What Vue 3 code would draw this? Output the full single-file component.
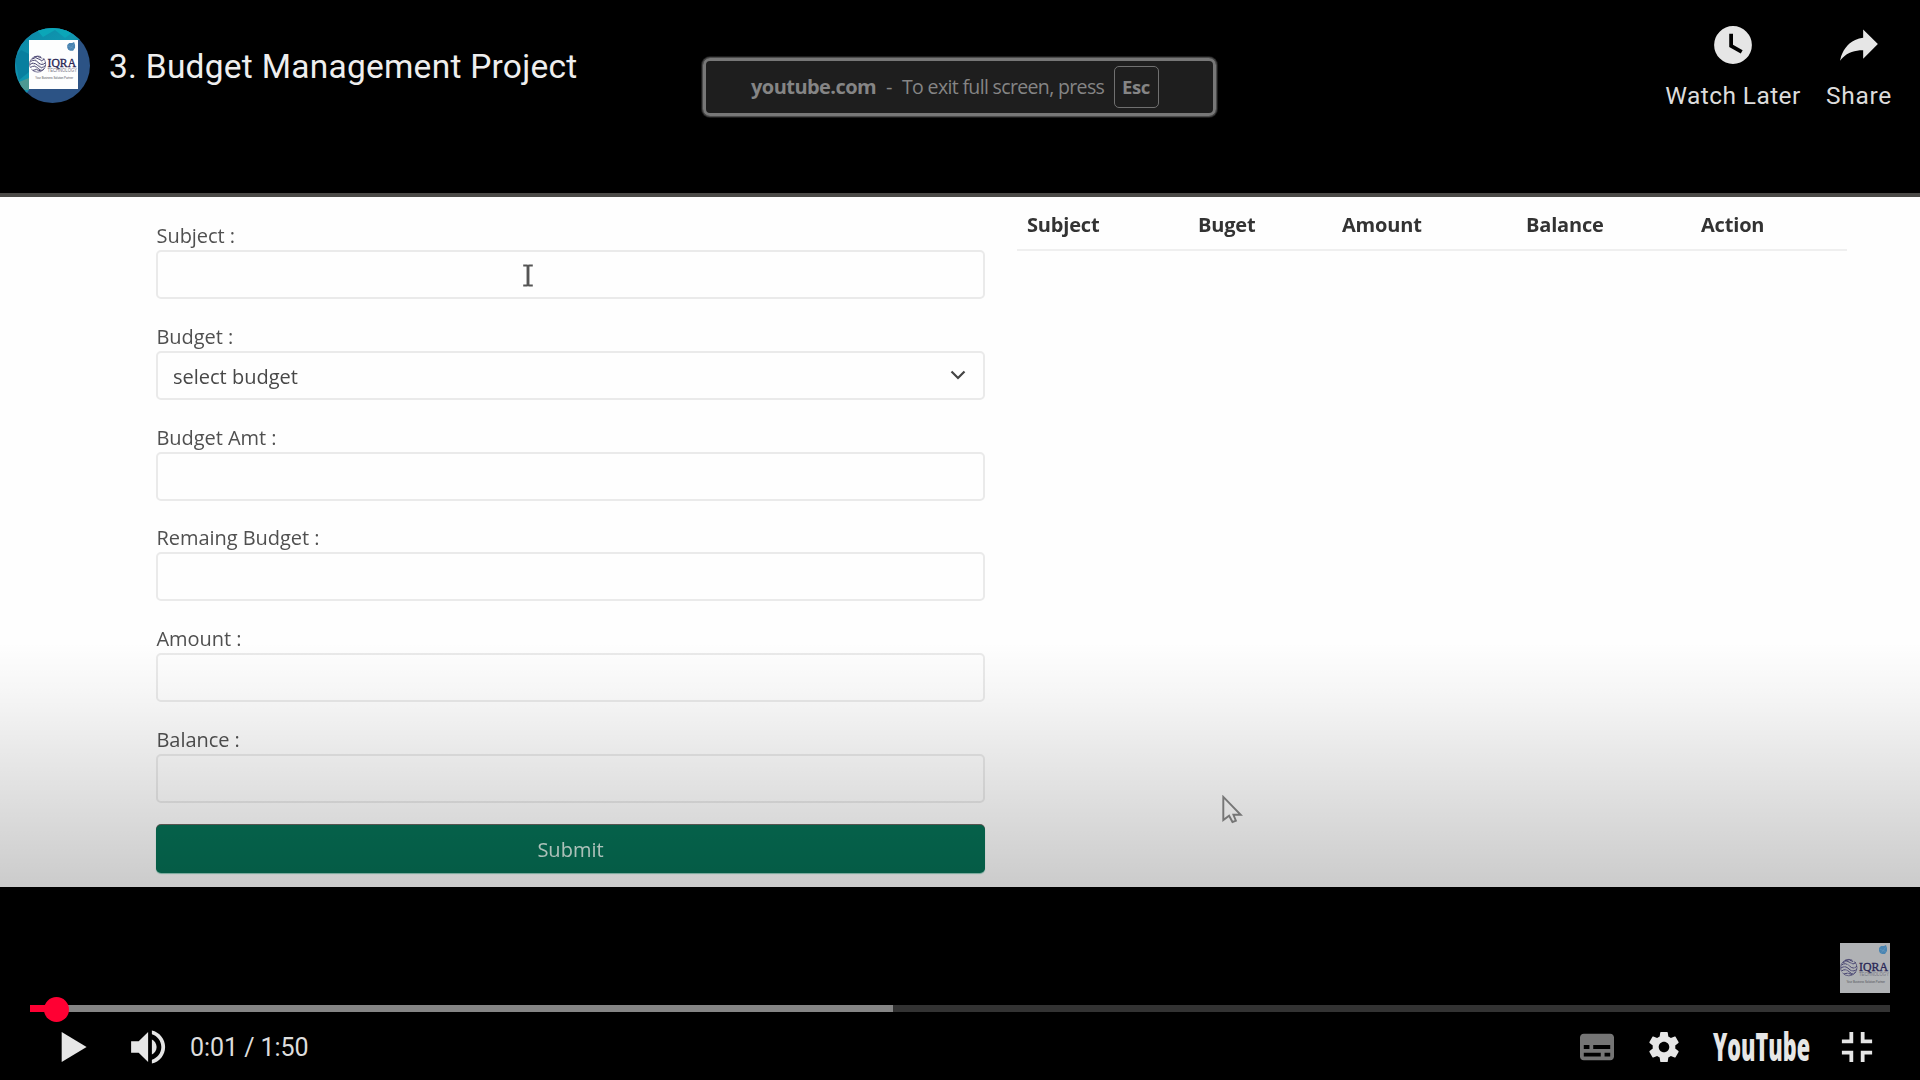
<script setup>
const fields = [
  { id: 'subject', label: 'Subject :' },
  { id: 'budget', label: 'Budget :', value: 'select budget', select: true },
  { id: 'budgetAmt', label: 'Budget Amt :' },
  { id: 'remaining', label: 'Remaing Budget :' },
  { id: 'amount', label: 'Amount :' },
  { id: 'balance', label: 'Balance :' },
]
const columns = ['Subject', 'Buget', 'Amount', 'Balance', 'Action']
</script>

<template>
  <div class="player">
    <svg class="defs" width="0" height="0">
      <defs>
        <linearGradient id="teal" x1="0" y1="0" x2="1" y2="1">
          <stop offset="0" stop-color="#0b86a5" />
          <stop offset=".5" stop-color="#1097b0" />
          <stop offset="1" stop-color="#2b5283" />
        </linearGradient>
        <clipPath id="round"><circle cx="37.5" cy="37.5" r="37.5" /></clipPath>
        <symbol id="iqra" viewBox="0 0 50 50">
          <g fill="none" stroke="#45416f" stroke-width="1">
            <circle cx="8.8" cy="24.6" r="8.2" stroke-width=".7" stroke-dasharray="20 2" />
            <path d="M3 19.500q4-3 7 0t6 0M1.500 22q4-3 8 1t7.500 0M1 25q4-3 8 1t8 0M1.500 28q4-3 8 1t6 0M4 31q3-2 8 .5M5 17.500q4-2 8 1" />
            <path d="M5 18q5 6 9 13M9 17q5 6 7 10M3 22q4 5 6 10" stroke="#a3a2b4" stroke-width=".6" />
          </g>
          <path d="M39 5l2-2 3 0 2-1 1 3 0 3-2 3-3 0-2-1-1-2Z" fill="#4a85b2" />
          <path d="M39.500 6l6 2.500M41.500 9.500l4-5" stroke="#78a5c6" stroke-width=".4" />
          <text x="19" y="27.600" font-family="Liberation Serif, serif" font-size="13" textLength="29" lengthAdjust="spacingAndGlyphs" fill="#2a2756" stroke="#2a2756" stroke-width=".35">IQRA</text>
          <text x="19" y="33" font-family="Liberation Sans, sans-serif" font-size="5" textLength="30" lengthAdjust="spacingAndGlyphs" fill="#777784">TECHNOLOGY</text>
          <text x="6.5" y="39.500" font-family="Liberation Sans, sans-serif" font-size="3.400" textLength="38.500" lengthAdjust="spacingAndGlyphs" fill="#4f5058">Your Business Solution Partner</text>
        </symbol>
      </defs>
    </svg>

    <header class="top">
      <svg class="avatar" viewBox="0 0 75 75">
        <g clip-path="url(#round)">
          <rect width="75" height="75" fill="#2c5385" />
          <path d="M0 0H66V12H14V62L8 70H0Z" fill="url(#teal)" />
          <path d="M0 30L6 22 14 26V44L4 52Z" fill="#087f9f" />
          <path d="M20 0l8 9 12-7 10 8 8-6V0Z" fill="#0ba6b8" />
          <path d="M4 54l10-4v12H6Z" fill="#4d9992" />
          <rect x="14" y="12" width="49" height="49" fill="#fdfefe" />
          <use href="#iqra" x="14" y="12" width="49" height="49" />
        </g>
      </svg>
      <h1 class="title"><span>3. Budget Management Project</span></h1>

      <div class="toast">
        <b class="host">youtube.com</b>
        <span class="dash">-</span>
        <span class="hint">To exit full screen, press</span>
        <kbd>Esc</kbd>
      </div>

      <nav class="actions">
        <button class="action later">
          <svg viewBox="0 0 36 36"><path fill-rule="evenodd" d="M18 8a10 10 0 1 0 0 20a10 10 0 0 0 0-20ZM16 19.02V12h2v5.86l5.1 2.95-1 1.73Z" /></svg>
          <span>Watch Later</span>
        </button>
        <button class="action share">
          <svg viewBox="0 0 36 36"><path d="m20.2 14.19 0-4.45 7.79 7.79-7.79 7.79 0-4.56C16.27 20.69 12.1 21.81 9.34 24.76 8.8 25.13 7.6 27.29 8.12 25.65 9.08 21.32 11.8 17.18 15.98 15.38c1.32-.6 2.76-.98 4.21-1.18z" /></svg>
          <span>Share</span>
        </button>
      </nav>
    </header>

    <main class="video">
      <form class="form" @submit.prevent>
        <div v-for="f in fields" :key="f.id" class="field">
          <label>{{ f.label }}</label>
          <div class="input">
            <span v-if="f.value">{{ f.value }}</span>
            <svg v-if="f.select" class="chevron" viewBox="0 0 16 10"><path d="M1.5 1.5 8 8l6.5-6.5" /></svg>
          </div>
        </div>
        <button class="submit">Submit</button>
      </form>
      <section class="table">
        <div class="row">
          <b v-for="c in columns" :key="c">{{ c }}</b>
        </div>
      </section>
      <svg class="ibeam" viewBox="0 0 12 24"><path d="M1 1.5h4l1 1 1-1h4M1 22.5h4l1-1 1 1h4" /><path d="M6 2v20" stroke-width="3" /></svg>
      <svg class="pointer" viewBox="0 0 22 30"><path d="M2 2V26L8 21.5 11.5 28 15 26.5 12.5 20.5H20Z" /></svg>
      <div class="shade"></div>
    </main>

    <footer class="bottom">
      <svg class="watermark" viewBox="0 0 50 50"><rect width="50" height="50" fill="#b0b2b5" /><use href="#iqra" width="50" height="50" /></svg>
      <div class="progress">
        <div class="loaded"></div>
        <div class="played"></div>
        <div class="knob"></div>
      </div>
      <div class="controls">
        <svg class="btn play" viewBox="0 0 36 36"><path d="M12 10 25.2 18 12 26Z" /></svg>
        <svg class="btn volume" viewBox="0 0 36 36"><path d="M8 21h4l5 5V10l-5 5H8ZM19 14v8c1.48-.68 2.5-2.23 2.5-4 0-1.74-1.02-3.26-2.5-4ZM19 11.29C21.89 12.15 24 14.83 24 18s-2.11 5.85-5 6.71v2.06c4.01-.91 7-4.49 7-8.77s-2.99-7.86-7-8.77Z" /></svg>
        <span class="time">0:01 / 1:50</span>
        <span class="spacer"></span>
        <svg class="btn cc" viewBox="0 0 36 36"><path fill-rule="evenodd" d="M11 11C9.89 11 9 11.9 9 13V23C9 24.1 9.89 25 11 25H25C26.1 25 27 24.1 27 23V13C27 11.9 26.1 11 25 11ZM11 17h3v2h-3ZM20 23h-9v-2h9ZM25 23h-3v-2h3ZM25 19h-9v-2h9Z" /></svg>
        <svg class="btn" viewBox="0 0 36 36"><path fill-rule="evenodd" d="m 23.94,18.78 c .03,-0.25 .05,-0.51 .05,-0.78 0,-0.27 -0.02,-0.52 -0.05,-0.78 l 1.68,-1.32 c .15,-0.12 .19,-0.33 .09,-0.51 l -1.6,-2.76 c -0.09,-0.17 -0.31,-0.24 -0.48,-0.17 l -1.99,.8 c -0.41,-0.32 -0.86,-0.58 -1.35,-0.78 l -0.30,-2.12 c -0.02,-0.19 -0.19,-0.33 -0.39,-0.33 l -3.2,0 c -0.2,0 -0.36,.14 -0.39,.33 l -0.30,2.12 c -0.48,.2 -0.93,.47 -1.35,.78 l -1.99,-0.8 c -0.18,-0.07 -0.39,0 -0.48,.17 l -1.6,2.76 c -0.10,.17 -0.05,.39 .09,.51 l 1.68,1.32 c -0.03,.25 -0.05,.52 -0.05,.78 0,.26 .02,.52 .05,.78 l -1.68,1.32 c -0.15,.12 -0.19,.33 -0.09,.51 l 1.6,2.76 c .09,.17 .31,.24 .48,.17 l 1.99,-0.8 c .41,.32 .86,.58 1.35,.78 l .30,2.12 c .02,.19 .19,.33 .39,.33 l 3.2,0 c .2,0 .36,-0.14 .39,-0.33 l .30,-2.12 c .48,-0.2 .93,-0.47 1.35,-0.78 l 1.99,.8 c .18,.07 .39,0 .48,-0.17 l 1.6,-2.76 c .09,-0.17 .05,-0.39 -0.09,-0.51 l -1.68,-1.32 z m -5.94,2.01 c -1.54,0 -2.8,-1.25 -2.8,-2.8 0,-1.54 1.25,-2.8 2.8,-2.8 1.54,0 2.8,1.25 2.8,2.8 0,1.54 -1.25,2.8 -2.8,2.8 z" /></svg>
        <svg class="brand" viewBox="0 0 125 68">
          <text x="15" y="48" textLength="97" lengthAdjust="spacingAndGlyphs">YouTube</text>
        </svg>
        <svg class="btn" viewBox="0 0 36 36"><path d="M14 14h-4v2h6v-6h-2ZM22 14v-4h-2v6h6v-2ZM20 26h2v-4h4v-2h-6ZM10 22h4v4h2v-6h-6Z" /></svg>
      </div>
    </footer>
  </div>
</template>

<style>
html, body { background: #000; overflow: hidden; }
</style>

<style scoped>
* { box-sizing: border-box; }
.player { width: 1920px; height: 1080px; display: flex; flex-direction: column; background: #000; font-family: Roboto, sans-serif; color: #eee; overflow: hidden; }
.defs { position: absolute; }
button { border: 0; background: none; padding: 0; font: inherit; color: inherit; }

.top { height: 193px; flex: none; display: flex; align-items: flex-start; padding-left: 15px; position: relative; }
.avatar { width: 75px; height: 75px; margin-top: 28px; flex: none; }
.title { margin: 47px 0 0 19px; font-size: 33.5px; line-height: 40px; font-weight: 400; letter-spacing: .26px; white-space: nowrap; }
.toast { position: absolute; left: 703px; top: 58px; width: 513px; height: 58px; border-radius: 7px; background: #1e1e1e; box-shadow: inset 0 0 0 3px #777, 0 0 0 1px #4a4a4a, 0 0 0 2px #1c1c1c; display: flex; align-items: center; padding-left: 48px; color: #858585; font: 20px/28px "Open Sans", sans-serif; white-space: nowrap; }
.host { width: 135px; letter-spacing: -.55px; }
.dash { width: 16px; }
.hint { width: 211.5px; font-size: 19.5px; letter-spacing: -.65px; }
kbd { width: 45px; height: 42px; border: 1px solid #707070; border-radius: 5px; font: 700 18.5px/40px "Open Sans", sans-serif; letter-spacing: -.3px; text-align: center; }
.actions { display: flex; margin: 11px 25px 0 auto; }
.action { display: flex; flex-direction: column; align-items: center; font-size: 24.5px; line-height: 30px; letter-spacing: .4px; color: #dcdcdc; white-space: nowrap; }
.action svg { width: 68px; height: 68px; fill: #e6e6e6; }
.action span { margin-top: 2px; }
.later { width: 144px; }
.share { width: 72px; margin-left: 18px; letter-spacing: .7px; }

.video { height: 694px; flex: none; position: relative; display: flex; background: #fefefe; border-top: 4px solid #4b4a47; padding-left: 156px; font: 20px/28px "Open Sans", sans-serif; color: #505050; }
.form { width: 829px; padding-top: 24px; filter: blur(.6px); }
.field { height: 100.8px; }
.field label { display: block; height: 29px; line-height: 30px; padding-left: .5px; letter-spacing: -.05px; }
.input { height: 49px; border: 2px solid #eaeaea; border-radius: 5px; display: flex; align-items: center; padding: 3px 17px 0 15px; color: #484848; }
.chevron { width: 16px; height: 10px; margin: -4px 0 0 auto; fill: none; stroke: #444; stroke-width: 2.2; }
.submit { display: block; width: 829px; height: 48px; margin-top: -1px; padding-top: 2px; background: #067156; border-radius: 5px; color: #d0e8df; box-shadow: 0 -1px 0 #65635e, 0 1px 1px #8dcdbb; }
.table { width: 830px; margin-left: 32px; filter: blur(.6px); }
.row { height: 54px; padding: 14px 0 0 10px; border-bottom: 2px solid #efefef; display: grid; grid-template-columns: 171px 144px 184px 175px auto; color: #333; font-size: 20px; letter-spacing: -.18px; }
.ibeam { position: absolute; left: 522px; top: 67px; width: 12px; height: 23px; fill: none; stroke: #555; stroke-width: 2; filter: blur(.5px); }
.pointer { position: absolute; left: 1221px; top: 598px; width: 22px; height: 29px; fill: #fff; stroke: #888; stroke-width: 2; filter: blur(.5px); }
.shade { position: absolute; left: 0; right: 0; bottom: 0; height: 245px; background: linear-gradient(to bottom, rgba(0,0,0,0), rgba(0,0,0,.03) 20%, rgba(0,0,0,.2)); }

.bottom { height: 193px; flex: none; display: flex; flex-direction: column; padding: 56px 30px 0; }
.watermark { width: 50px; height: 50px; align-self: flex-end; flex: none; }
.progress { height: 7px; margin-top: 12px; background: #333; position: relative; flex: none; }
.loaded { width: 863px; height: 7px; background: #858585; }
.played { position: absolute; left: 0; top: 0; width: 27px; height: 7px; background: #f03; }
.knob { position: absolute; left: 14px; top: -8px; width: 25px; height: 25px; border-radius: 50%; background: #f03; }
.controls { display: flex; align-items: center; height: 68px; margin: 1px -1px 0 0; padding-left: 9px; fill: #e6e6e6; flex: none; }
.btn { width: 68px; height: 68px; flex: none; }
.volume { margin-left: 9px; }
.cc { fill: #757575; margin-right: -1px; }
.time { margin-left: 6px; font-size: 25px; color: #ddd; white-space: nowrap; letter-spacing: -.05px; }
.spacer { flex: 1; }
.brand { width: 125px; height: 68px; flex: none; overflow: visible; }
.brand text { font: 800 39px "Open Sans", sans-serif; }
</style>
